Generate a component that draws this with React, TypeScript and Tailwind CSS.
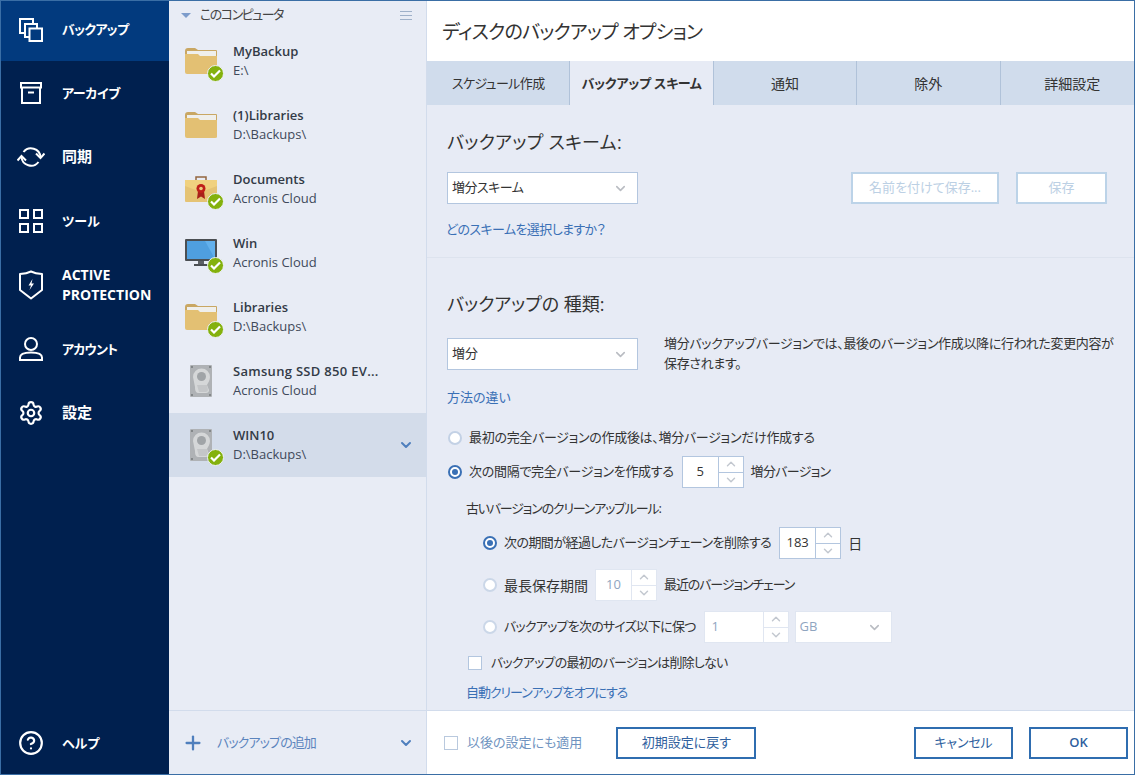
import { ChevronDown, ChevronUp, CircleHelp, Plus, Settings } from "lucide-react";
import type { ReactNode } from "react";

function BackupIcon() {
  return (
    <svg width="24" height="24" viewBox="0 0 24 24" fill="none" stroke="white" strokeWidth="2">
      <path d="M5 15H1V1H14V5" />
      <path d="M10 19H6V6H18V10" />
      <rect x="10.5" y="10.5" width="12.5" height="12.5" />
    </svg>
  );
}

function ArchiveIcon() {
  return (
    <svg width="24" height="24" viewBox="0 0 24 24" fill="none" stroke="white" strokeWidth="2">
      <rect x="2" y="2" width="20" height="4.5" />
      <path d="M3 6.5V22H21V6.5" />
      <path d="M9 11.5H15" />
    </svg>
  );
}

function SyncIcon() {
  return (
    <svg width="28" height="24" viewBox="0 0 28 24" fill="none" stroke="white" strokeWidth="2">
      <path d="M6.5 7A9.5 9.5 0 0 1 23.5 12" />
      <path d="M19 8.5L23.5 13L27.5 8.5" />
      <path d="M21.5 17A9.5 9.5 0 0 1 4.5 12" />
      <path d="M0.5 15.5L4.5 11L9 15.5" />
    </svg>
  );
}

function ToolsIcon() {
  return (
    <svg width="24" height="24" viewBox="0 0 24 24" fill="none" stroke="white" strokeWidth="2">
      <rect x="1" y="1" width="8" height="8" />
      <rect x="15" y="1" width="8" height="8" />
      <rect x="1" y="15" width="8" height="8" />
      <rect x="15" y="15" width="8" height="8" />
    </svg>
  );
}

function ShieldIcon() {
  return (
    <svg width="24" height="30" viewBox="0 0 24 30" fill="none">
      <path d="M12 1.5C9 3 5 3.8 1 4V20L12 28.5L23 20V4C19 3.8 15 3 12 1.5Z" stroke="white" strokeWidth="2" strokeLinejoin="round" />
      <path d="M13.5 9L9.5 15.5H12L10.5 20L15 13.5H12.5Z" fill="white" />
    </svg>
  );
}

function UserIcon() {
  return (
    <svg width="24" height="24" viewBox="0 0 24 24" fill="none" stroke="white" strokeWidth="2">
      <circle cx="12" cy="7" r="6" />
      <path d="M1 23V20.5C1 17 6 15.5 12 15.5S23 17 23 20.5V23Z" />
    </svg>
  );
}

function Badge() {
  return (
    <span className="absolute left-[22px] top-[22px] flex h-[17px] w-[17px] items-center justify-center rounded-full border border-[#eef1f7] bg-[#84b10d]">
      <svg width="11" height="9" viewBox="0 0 11 9" fill="none" stroke="white" strokeWidth="2.2">
        <path d="M1 4.5L4 7.5L10 1.5" />
      </svg>
    </span>
  );
}

function FolderIcon() {
  return (
    <svg width="32" height="27" viewBox="0 0 32 27">
      <path d="M0 3Q0 0 3 0H10L13 2H31Q32 2 32 3V12H0Z" fill="#c9a763" />
      <rect x="2" y="3" width="29" height="8" fill="#efefec" />
      <path d="M0 6H13L15 8H32V25Q32 26 30 26H2Q0 26 0 24Z" fill="#e3c073" />
    </svg>
  );
}

function CaseIcon() {
  return (
    <svg width="32" height="27" viewBox="0 0 32 27">
      <path d="M11 4V1H21V4" fill="none" stroke="#93653f" strokeWidth="1.5" />
      <rect x="0" y="4" width="32" height="22" rx="1" fill="#e5c374" />
      <path d="M0 4H32V10L16 16L0 10Z" fill="#f0d17f" />
      <path d="M13 15L12 23L16 20.5L20 23L19 15Z" fill="#a8201a" />
      <circle cx="16" cy="12.5" r="4.5" fill="#bf1f1a" />
      <circle cx="16" cy="12.5" r="1.8" fill="#eccb7d" />
    </svg>
  );
}

function MonitorIcon() {
  return (
    <svg width="32" height="28" viewBox="0 0 32 28">
      <rect x="0" y="0" width="32" height="22" rx="1" fill="#4a4e52" />
      <rect x="2" y="2" width="28" height="18" fill="#62b0ec" />
      <path d="M2 2H20L30 20H2Z" fill="#4f9fdf" />
      <rect x="13" y="22" width="6" height="3" fill="#5d6165" />
      <rect x="9" y="25" width="14" height="2" fill="#4a4e52" />
    </svg>
  );
}

function DiskIcon() {
  return (
    <svg width="22" height="32" viewBox="0 0 22 32">
      <rect x="0" y="0" width="22" height="32" rx="1" fill="#afb2b5" />
      <circle cx="2" cy="2" r="1" fill="#74787b" />
      <circle cx="20" cy="2" r="1" fill="#74787b" />
      <circle cx="2" cy="30" r="1" fill="#74787b" />
      <circle cx="20" cy="30" r="1" fill="#74787b" />
      <path d="M3 12A8.5 8.5 0 0 1 20 12C20 15 18 18 17 20L19 25Q19 28 16 28H9C6 28 5 26 5 22Z" fill="#d5d7d8" />
      <circle cx="11.5" cy="11.5" r="4.5" fill="#a0a4a7" />
      <path d="M7 20L17 20L18 25Q18 27 15.5 27H9Z" fill="#c4c6c8" />
    </svg>
  );
}

function NavItem({ icon, height, children }: { icon: ReactNode; height: string; children: ReactNode }) {
  return (
    <div className={`flex items-center ${height}`}>
      <div className="flex w-[59px] shrink-0 justify-center">{icon}</div>
      <div className="ml-[2px] text-[13px] font-bold leading-[19px] text-white">{children}</div>
    </div>
  );
}

function BackupRow({ icon, name, path, ok, selected }: { icon: ReactNode; name: ReactNode; path: string; ok?: boolean; selected?: boolean }) {
  return (
    <div className={`flex h-[64px] items-center pl-[16px] pr-[12px] ${selected ? "bg-[#d3dcea]" : ""}`}>
      <div className="relative flex h-[36px] w-[32px] shrink-0 items-center justify-center">
        {icon}
        {ok && <Badge />}
      </div>
      <div className="ml-[16px] flex-1">
        <div className="text-[13px] font-semibold leading-[19px] text-[#333b47]">{name}</div>
        <div className="text-[13px] leading-[19px] text-[#40495a]">{path}</div>
      </div>
      {selected && <ChevronDown size={16} strokeWidth={3} className="text-[#4f7fbd]" />}
    </div>
  );
}

function Select({ label, width, disabled }: { label: ReactNode; width: string; disabled?: boolean }) {
  return (
    <div className={`flex h-[32px] items-center justify-between bg-white pl-[4px] pr-[9px] text-[13px] ${width} ${disabled ? "border border-[#e0e6f1] text-[#8fa5bf]" : "border border-[#b3c6df] text-[#333]"}`}>
      <span>{label}</span>
      <ChevronDown size={15} strokeWidth={2.5} className="text-[#b9bcc2]" />
    </div>
  );
}

function Spin({ value, width, disabled, align }: { value: string; width: string; disabled?: boolean; align?: string }) {
  const border = disabled ? "border-[#e0e6f1]" : "border-[#b3c6df]";
  return (
    <div className={`flex h-[32px] shrink-0 border bg-white ${border} ${width}`}>
      <div className={`flex flex-1 items-center text-[13px] ${align ?? "justify-center"} ${disabled ? "text-[#8fa5bf]" : "text-[#333]"}`}>{value}</div>
      <div className={`flex w-[25px] flex-col border-l ${border}`}>
        <div className={`flex flex-1 items-center justify-center border-b ${border}`}>
          <ChevronUp size={14} strokeWidth={2.5} className="text-[#c3c8d0]" />
        </div>
        <div className="flex flex-1 items-center justify-center">
          <ChevronDown size={14} strokeWidth={2.5} className="text-[#c3c8d0]" />
        </div>
      </div>
    </div>
  );
}

function Radio({ checked, disabled }: { checked?: boolean; disabled?: boolean }) {
  return (
    <span className={`flex h-[14px] w-[14px] shrink-0 items-center justify-center rounded-full border-2 bg-white ${checked ? "border-[#3a70b5]" : disabled ? "border-[#cbd7e8]" : "border-[#c3d1e5]"}`}>
      {checked && <span className="h-[6px] w-[6px] rounded-full bg-[#3a70b5]" />}
    </span>
  );
}

const tabs = [
  { label: "スケジュール作成", cls: "text-[13px] tracking-[-0.6px]" },
  { label: "バックアップ スキーム", cls: "bg-[#e7ebf5] font-bold tracking-[-0.2px]" },
  { label: "通知", cls: "text-[14px]" },
  { label: "除外", cls: "text-[14px]" },
  { label: "詳細設定", cls: "border-r-0 text-[14px]" },
];

export default function App() {
  return (
    <div className="flex h-[775px] w-[1135px] overflow-hidden border border-[#3a6ea5] font-['Open_Sans','Noto_Sans_CJK_JP',sans-serif] text-[13px] text-[#333] [font-feature-settings:'palt']">
      {/* Sidebar */}
      <aside className="flex w-[168px] shrink-0 flex-col justify-between bg-[#00204f]">
        <div>
          <div className="bg-[#023a7e]">
            <NavItem height="h-[60px] pb-[3px]" icon={<BackupIcon />}><span className="tracking-[-0.7px]">バックアップ</span></NavItem>
          </div>
          <NavItem height="h-[64px]" icon={<ArchiveIcon />}><span className="tracking-[-0.3px]">アーカイブ</span></NavItem>
          <NavItem height="h-[64px]" icon={<SyncIcon />}><span className="text-[15px]">同期</span></NavItem>
          <NavItem height="h-[64px]" icon={<ToolsIcon />}>ツール</NavItem>
          <NavItem height="h-[64px]" icon={<ShieldIcon />}><span className="text-[14px]">ACTIVE<br />PROTECTION</span></NavItem>
          <NavItem height="h-[64px]" icon={<UserIcon />}><span className="tracking-[-0.8px]">アカウント</span></NavItem>
          <NavItem height="h-[64px]" icon={<Settings size={26} strokeWidth={2} color="white" />}><span className="text-[15px]">設定</span></NavItem>
        </div>
        <NavItem height="h-[62px]" icon={<CircleHelp size={26} strokeWidth={2} color="white" />}>ヘルプ</NavItem>
      </aside>

      {/* Backup list */}
      <section className="flex w-[258px] shrink-0 flex-col border-r border-[#d2dcec] bg-[#e8ecf5]">
        <div className="flex h-[28px] items-center justify-between pl-[12px] pr-[14px]">
          <div className="flex items-center gap-[9px]">
            <span className="h-0 w-0 border-x-[5px] border-t-[5px] border-x-transparent border-t-[#7d9ccb]" />
            <span className="tracking-[-1.5px] text-[#444]">このコンピュータ</span>
          </div>
          <div className="flex w-[12px] flex-col gap-[3px]">
            <span className="h-px bg-[#9fb1c9]" />
            <span className="h-px bg-[#9fb1c9]" />
            <span className="h-px bg-[#9fb1c9]" />
          </div>
        </div>
        <div className="flex-1">
          <BackupRow icon={<FolderIcon />} name="MyBackup" path="E:\" ok />
          <BackupRow icon={<FolderIcon />} name="(1)Libraries" path="D:\Backups\" />
          <BackupRow icon={<CaseIcon />} name="Documents" path="Acronis Cloud" ok />
          <BackupRow icon={<MonitorIcon />} name="Win" path="Acronis Cloud" ok />
          <BackupRow icon={<FolderIcon />} name="Libraries" path="D:\Backups\" ok />
          <BackupRow icon={<DiskIcon />} name={<span className="tracking-[0.3px]">Samsung SSD 850 EV...</span>} path="Acronis Cloud" />
          <BackupRow icon={<DiskIcon />} name="WIN10" path="D:\Backups\" ok selected />
        </div>
        <div className="flex h-[64px] items-center border-t border-[#d2dcec] pl-[13px] pr-[12px] text-[#5b84bd]">
          <Plus size={22} strokeWidth={2.5} className="text-[#4f7fbd]" />
          <span className="ml-[13px] flex-1 tracking-[-0.9px]">バックアップの追加</span>
          <ChevronDown size={16} strokeWidth={3} className="text-[#4f7fbd]" />
        </div>
      </section>

      {/* Options */}
      <main className="flex min-w-0 flex-1 flex-col bg-[#e7ebf5]">
        <div className="flex h-[60px] items-center bg-white pl-[15px] pt-[2px] text-[19px] tracking-[-0.7px] text-[#333]">ディスクのバックアップ オプション</div>
        <div className="flex h-[44px] shrink-0 overflow-hidden bg-[#d0dcec]">
          {tabs.map((t) => (
            <div key={t.label} className={`flex w-[143.4px] shrink-0 items-center justify-center border-r border-[#b0c2d9] pt-[1px] ${t.cls}`}>
              {t.label}
            </div>
          ))}
        </div>

        <div className="flex-1 pt-[24px]">
          <div className="px-[20px]">
            <div className="h-[26px] text-[18px] leading-[26px] tracking-[0.3px]">バックアップ スキーム:</div>
            <div className="mt-[17px] flex items-center">
              <Select label={<span className="tracking-[-0.5px]">増分スキーム</span>} width="w-[191px]" />
              <div className="ml-auto mr-[7px] flex gap-[17px]">
                <div className="flex h-[32px] w-[148px] items-center justify-center border-2 border-[#bcd3e8] bg-white text-[#bcd0e4]">名前を付けて保存...</div>
                <div className="flex h-[32px] w-[91px] items-center justify-center border-2 border-[#bcd3e8] bg-white text-[#bcd0e4]">保存</div>
              </div>
            </div>
            <div className="mt-[16px] ml-[-1px] h-[18px] leading-[18px] tracking-[-0.6px] text-[#3a70b5]">どのスキームを選択しますか？</div>
          </div>
          <div className="mt-[19px] h-px bg-[#dde3ee]" />
          <div className="px-[20px]">
            <div className="mt-[33px] h-[26px] text-[18px] leading-[26px]">バックアップの 種類:</div>
            <div className="mt-[21px] flex h-[32px]">
              <Select label="増分" width="w-[191px] shrink-0" />
              <p className="ml-[26px] mt-[-5px] whitespace-nowrap leading-[20px] tracking-[-0.33px]">
                増分バックアップバージョンでは、最後のバージョン作成以降に行われた変更内容が<br />保存されます。
              </p>
            </div>
            <div className="mt-[18px] h-[18px] leading-[18px] text-[#3a70b5]">方法の違い</div>

            <div className="mt-[22px] flex h-[20px] items-center gap-[7px] pl-[1px]">
              <Radio />
              <span className="tracking-[-0.3px]">最初の完全バージョンの作成後は、増分バージョンだけ作成する</span>
            </div>
            <div className="mt-[8px] flex h-[32px] items-center gap-[7px] pl-[1px]">
              <Radio checked />
              <span className="tracking-[-0.3px]">次の間隔で完全バージョンを作成する</span>
              <Spin value="5" width="w-[62px] ml-[1px]" />
              <span className="tracking-[-0.7px]">増分バージョン</span>
            </div>
            <div className="mt-[11px] h-[18px] pl-[19px] leading-[18px] tracking-[-1.2px]">古いバージョンのクリーンアップルール:</div>

            <div className="mt-[10px] flex h-[32px] items-center gap-[7px] pl-[36px]">
              <Radio checked />
              <span className="tracking-[-0.56px]">次の期間が経過したバージョンチェーンを削除する</span>
              <Spin value="183" width="w-[62px] ml-[1px]" />
              <span className="text-[14px]">日</span>
            </div>
            <div className="mt-[10px] flex h-[32px] items-center gap-[7px] pl-[36px]">
              <Radio disabled />
              <span className="text-[14px]">最長保存期間</span>
              <Spin value="10" width="w-[62px]" disabled />
              <span className="tracking-[-1.1px]">最近のバージョンチェーン</span>
            </div>
            <div className="mt-[10px] flex h-[32px] items-center gap-[7px] pl-[36px]">
              <Radio disabled />
              <span className="tracking-[-0.8px]">バックアップを次のサイズ以下に保つ</span>
              <Spin value="1" width="w-[85px] ml-[1px]" disabled align="justify-start pl-[7px]" />
              <Select label="GB" width="w-[97px] ml-[-1px]" disabled />
            </div>
            <div className="mt-[11px] flex h-[18px] items-center gap-[9px] pl-[21px]">
              <span className="h-[14px] w-[14px] border border-[#b3c6df] bg-white" />
              <span className="tracking-[-0.8px]">バックアップの最初のバージョンは削除しない</span>
            </div>
            <div className="mt-[11px] h-[18px] pl-[19px] leading-[18px] tracking-[-1.07px] text-[#3a70b5]">自動クリーンアップをオフにする</div>
          </div>
        </div>

        <div className="flex h-[64px] items-center border-t border-[#d2dcec] bg-white pl-[17px] pr-[6px]">
          <span className="h-[14px] w-[14px] border border-[#b9c9de]" />
          <span className="ml-[9px] text-[#6f93c0]">以後の設定にも適用</span>
          <div className="ml-[34px] flex h-[32px] w-[140px] items-center justify-center border-2 border-[#2f6db0] text-[#2f5f9e]">初期設定に戻す</div>
          <div className="ml-auto flex h-[32px] w-[99px] items-center justify-center border-2 border-[#2f6db0] tracking-[-0.2px] text-[#2f5f9e]">キャンセル</div>
          <div className="ml-[16px] flex h-[32px] w-[99px] items-center justify-center border-2 border-[#2f6db0] font-semibold text-[#2f5f9e]">OK</div>
        </div>
      </main>
    </div>
  );
}
